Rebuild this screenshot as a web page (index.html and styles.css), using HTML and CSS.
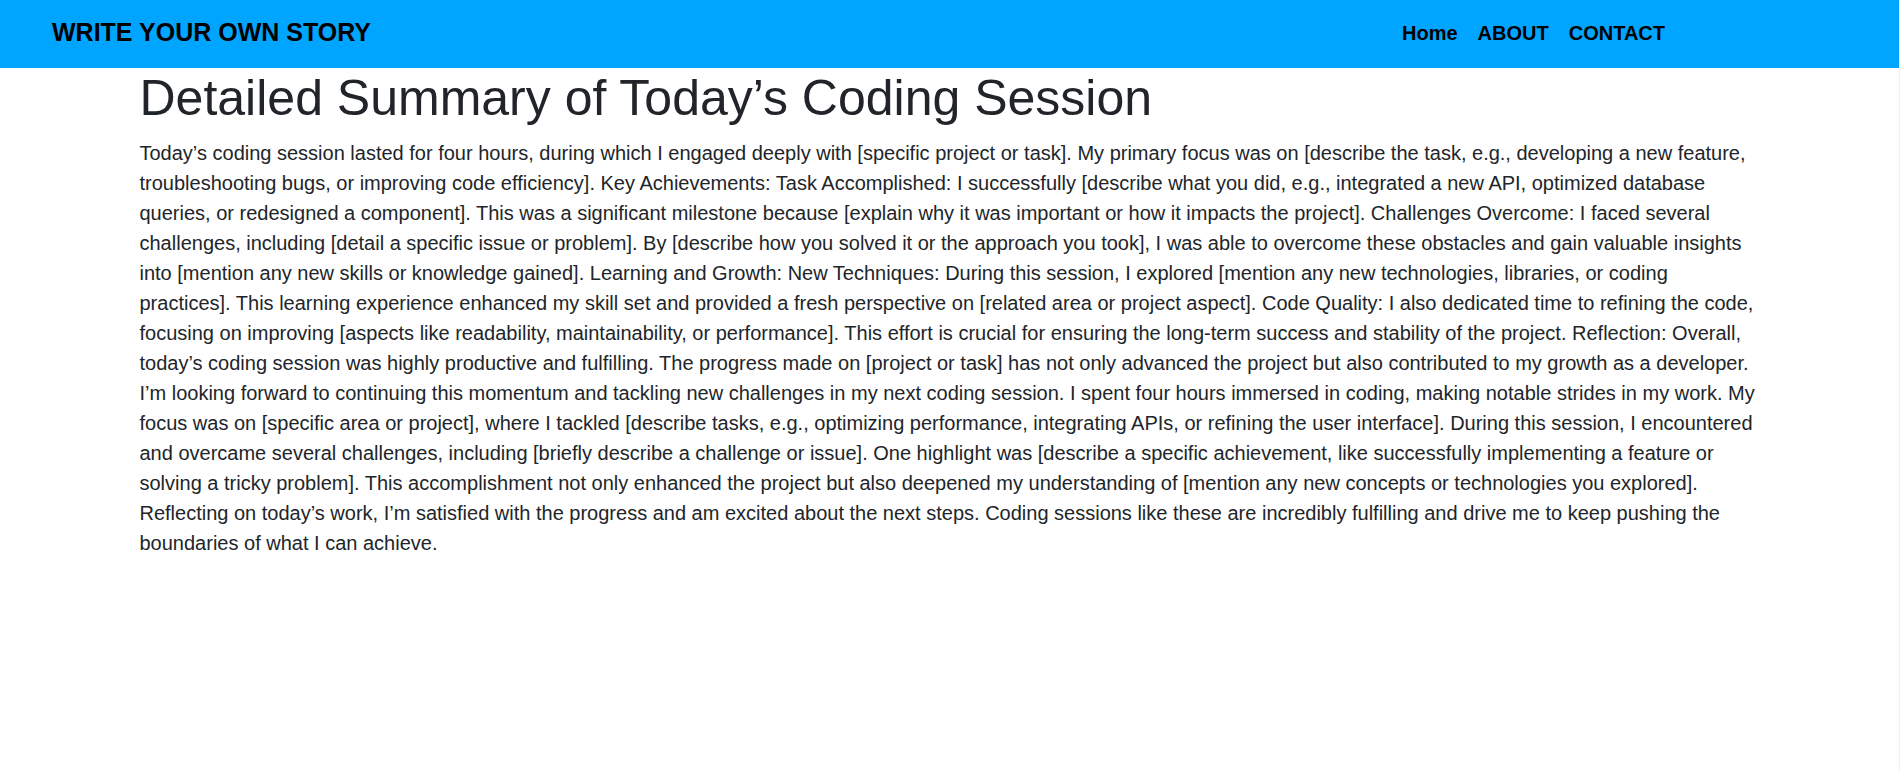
FILE: index.html
```html
<!DOCTYPE html>
<html lang="en">
<head>
<meta charset="utf-8">
<meta name="viewport" content="width=device-width, initial-scale=1">
<title>Write Your Own Story</title>
<link rel="stylesheet" href="styles.css">
</head>
<body>
<header class="navbar">
  <a class="brand" href="#">WRITE YOUR OWN STORY</a>
  <nav class="links">
    <a href="#">Home</a>
    <a href="#">ABOUT</a>
    <a href="#">CONTACT</a>
  </nav>
</header>
<main class="article">
  <h1>Detailed Summary of Today’s Coding Session</h1>
  <p>Today’s coding session lasted for four hours, during which I engaged deeply with [specific project or task]. My primary focus was on [describe the task, e.g., developing a new feature, troubleshooting bugs, or improving code efficiency]. Key Achievements: Task Accomplished: I successfully [describe what you did, e.g., integrated a new API, optimized database queries, or redesigned a component]. This was a significant milestone because [explain why it was important or how it impacts the project]. Challenges Overcome: I faced several challenges, including [detail a specific issue or problem]. By [describe how you solved it or the approach you took], I was able to overcome these obstacles and gain valuable insights into [mention any new skills or knowledge gained]. Learning and Growth: New Techniques: During this session, I explored [mention any new technologies, libraries, or coding practices]. This learning experience enhanced my skill set and provided a fresh perspective on [related area or project aspect]. Code Quality: I also dedicated time to refining the code, focusing on improving [aspects like readability, maintainability, or performance]. This effort is crucial for ensuring the long-term success and stability of the project. Reflection: Overall, today’s coding session was highly productive and fulfilling. The progress made on [project or task] has not only advanced the project but also contributed to my growth as a developer. I’m looking forward to continuing this momentum and tackling new challenges in my next coding session. I spent four hours immersed in coding, making notable strides in my work. My focus was on [specific area or project], where I tackled [describe tasks, e.g., optimizing performance, integrating APIs, or refining the user interface]. During this session, I encountered and overcame several challenges, including [briefly describe a challenge or issue]. One highlight was [describe a specific achievement, like successfully implementing a feature or solving a tricky problem]. This accomplishment not only enhanced the project but also deepened my understanding of [mention any new concepts or technologies you explored]. Reflecting on today’s work, I’m satisfied with the progress and am excited about the next steps. Coding sessions like these are incredibly fulfilling and drive me to keep pushing the boundaries of what I can achieve.</p>
</main>
</body>
</html>
```
FILE: styles.css
```css
* {
  box-sizing: border-box;
}

body {
  margin: 0;
  min-height: 100vh;
  border-right: 1px solid #f0f0f0;
  font-family: "Liberation Sans", Arial, sans-serif;
  font-size: 20px;
  line-height: 30px;
  color: #212529;
  background: #fff;
}

.navbar {
  display: flex;
  align-items: center;
  justify-content: space-between;
  min-height: 68px;
  padding: 0 234px 4px 52px;
  background: #00a5ff;
  font-weight: 700;
}

.navbar a {
  color: #000;
  text-decoration: none;
}

.brand {
  font-size: 25px;
}

.links {
  display: flex;
  gap: 20px;
  padding-top: 2px;
}

.article {
  max-width: 1650px;
  margin: 0 auto;
  padding: 0 15px;
}

.article h1 {
  margin: 0 0 10px;
  font-size: 50px;
  line-height: 60px;
  font-weight: 500;
}

.article p {
  margin: 0 0 20px;
}
```
